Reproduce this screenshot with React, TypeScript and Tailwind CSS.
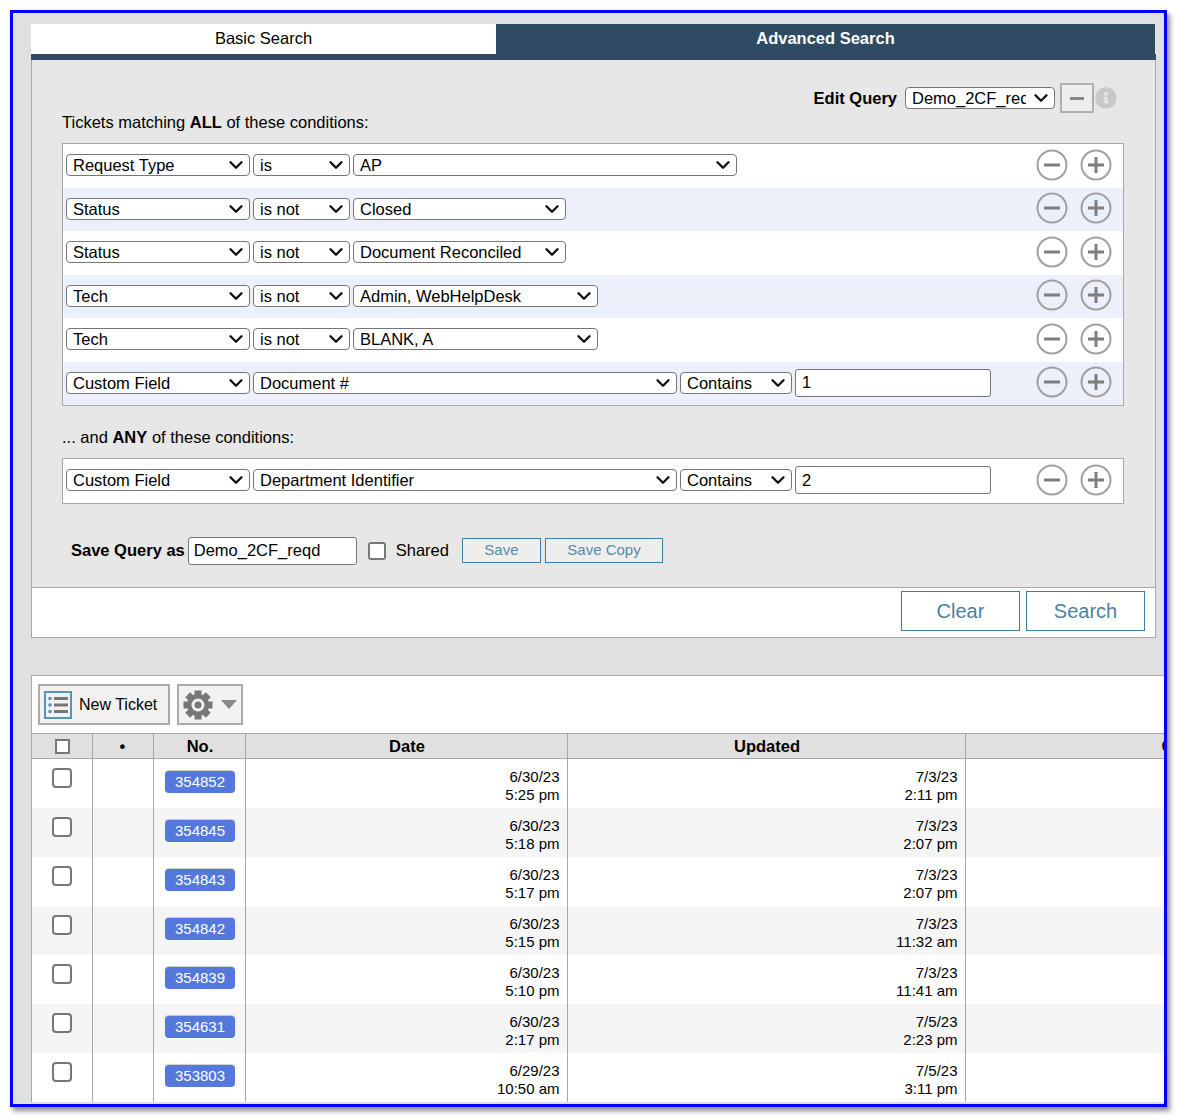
import { ChevronDown } from 'lucide-react';
import { FaInfoCircle } from 'react-icons/fa';

interface Condition {
  field: string;
  fieldWidth: string;
  op: string;
  opWidth: string;
  value: string;
  valueWidth: string;
  text?: string;
}

const FONT = "font-['Liberation_Sans',Arial,sans-serif]";

const allConditions: Condition[] = [
  { field: 'Request Type', fieldWidth: 'w-[184px]', op: 'is', opWidth: 'w-[97px]', value: 'AP', valueWidth: 'w-[384px]' },
  { field: 'Status', fieldWidth: 'w-[184px]', op: 'is not', opWidth: 'w-[97px]', value: 'Closed', valueWidth: 'w-[213px]' },
  { field: 'Status', fieldWidth: 'w-[184px]', op: 'is not', opWidth: 'w-[97px]', value: 'Document Reconciled', valueWidth: 'w-[213px]' },
  { field: 'Tech', fieldWidth: 'w-[184px]', op: 'is not', opWidth: 'w-[97px]', value: 'Admin, WebHelpDesk', valueWidth: 'w-[245px]' },
  { field: 'Tech', fieldWidth: 'w-[184px]', op: 'is not', opWidth: 'w-[97px]', value: 'BLANK, A', valueWidth: 'w-[245px]' },
  { field: 'Custom Field', fieldWidth: 'w-[184px]', op: 'Document #', opWidth: 'w-[424px]', value: 'Contains', valueWidth: 'w-[112px]', text: '1' },
];

const anyConditions: Condition[] = [
  { field: 'Custom Field', fieldWidth: 'w-[184px]', op: 'Department Identifier', opWidth: 'w-[424px]', value: 'Contains', valueWidth: 'w-[112px]', text: '2' },
];

const tickets = [
  { no: '354852', date: '6/30/23', time: '5:25 pm', upDate: '7/3/23', upTime: '2:11 pm' },
  { no: '354845', date: '6/30/23', time: '5:18 pm', upDate: '7/3/23', upTime: '2:07 pm' },
  { no: '354843', date: '6/30/23', time: '5:17 pm', upDate: '7/3/23', upTime: '2:07 pm' },
  { no: '354842', date: '6/30/23', time: '5:15 pm', upDate: '7/3/23', upTime: '11:32 am' },
  { no: '354839', date: '6/30/23', time: '5:10 pm', upDate: '7/3/23', upTime: '11:41 am' },
  { no: '354631', date: '6/30/23', time: '2:17 pm', upDate: '7/5/23', upTime: '2:23 pm' },
  { no: '353803', date: '6/29/23', time: '10:50 am', upDate: '7/5/23', upTime: '3:11 pm' },
];

function Select({ value, className }: { value: string; className: string }) {
  return (
    <div className={`relative h-[22px] shrink-0 ${className}`}>
      <select
        defaultValue={value}
        className="block h-[22px] w-full appearance-none rounded-[4px] border border-[#767676] bg-white pl-[6px] pr-[28px] text-[16.5px] leading-[20px] text-black"
      >
        <option value={value}>{value}</option>
      </select>
      <ChevronDown
        size={22}
        strokeWidth={2.6}
        className="pointer-events-none absolute right-[3px] top-0 text-[#111]"
      />
    </div>
  );
}

function RoundIcon({ plus }: { plus?: boolean }) {
  return (
    <svg width="32" height="32" viewBox="0 0 32 32" className="shrink-0">
      <circle cx="16" cy="16" r="14.5" fill="none" stroke="#a0a0a0" strokeWidth="2" />
      <path d={plus ? 'M8 16h16M16 8v16' : 'M8 16h16'} stroke="#7d7d7d" strokeWidth="3" fill="none" />
    </svg>
  );
}

function ConditionRow({ row, shaded }: { row: Condition; shaded: boolean }) {
  return (
    <div className={`flex h-[43.5px] items-start gap-[3px] pl-[3px] pr-[11px] pt-[10px] ${shaded ? 'bg-[#ebf0fa]' : 'bg-white'}`}>
      <Select value={row.field} className={row.fieldWidth} />
      <Select value={row.op} className={row.opWidth} />
      <Select value={row.value} className={row.valueWidth} />
      {row.text && (
        <input
          defaultValue={row.text}
          className="-mt-[3px] h-[28px] w-[196px] rounded-[3px] border border-[#767676] bg-white px-[6px] text-[16.5px] text-black"
        />
      )}
      <div className="-mt-[5.5px] ml-auto flex gap-[12px]">
        <RoundIcon />
        <RoundIcon plus />
      </div>
    </div>
  );
}

function ListIcon() {
  return (
    <svg width="28" height="28" viewBox="0 0 28 28" className="shrink-0">
      <rect x="1" y="1" width="26" height="26" fill="none" stroke="#5b93b5" strokeWidth="2" />
      <g fill="#5b93b5">
        <circle cx="6" cy="7.5" r="1.8" />
        <circle cx="6" cy="14" r="1.8" />
        <circle cx="6" cy="20.5" r="1.8" />
      </g>
      <path d="M10 7.5h14M10 14h14M10 20.5h14" stroke="#777" strokeWidth="3" fill="none" />
    </svg>
  );
}

function GearIcon() {
  return (
    <svg width="32" height="32" viewBox="0 0 32 32" className="shrink-0">
      <g stroke="#777" strokeWidth="7">
        <path d="M16 1.5v29M1.5 16h29M5.7 5.7l20.6 20.6M26.3 5.7L5.7 26.3" />
      </g>
      <circle cx="16" cy="16" r="11" fill="#777" />
      <circle cx="16" cy="16" r="6.5" fill="#f2f2f2" />
      <circle cx="16" cy="16" r="3.5" fill="#777" />
    </svg>
  );
}

function Checkbox() {
  return (
    <input
      type="checkbox"
      className="block h-[20px] w-[20px] appearance-none rounded-[4px] border-2 border-[#777] bg-white"
    />
  );
}

export default function App() {
  return (
    <div className={`${FONT} h-[1118px] w-[1178px] overflow-hidden bg-white pl-[10px] pt-[10px] text-[16.5px] text-black`}>
      <div className="h-[1097px] w-[1157px] overflow-hidden border-[3px] border-[#0000ff] bg-[#dfe0e2] pl-[18px] pt-[11px] shadow-[3px_4px_5px_rgba(0,0,0,0.45)]">
        <div className="w-[1125px]">
          {/* Tabs */}
          <div className="flex h-[30px] w-[1124px]">
            <div className="flex w-[465px] items-center justify-center bg-white pb-[2px]">Basic Search</div>
            <div className="flex flex-1 items-center justify-center bg-[#2f4a63] pb-[2px] font-bold text-white">
              Advanced Search
            </div>
          </div>
          <div className="h-[6px] bg-[#2f4a63]" />

          {/* Query form */}
          <div className="h-[527px] border-x border-[#a8a8a8] bg-[#e7e7e7] pl-[30px] pr-[31px] pt-[23px]">
            <div className="mr-[7px] flex h-[30px] items-center justify-end">
              <span className="mr-[8px] font-bold">Edit Query</span>
              <Select value="Demo_2CF_reqd" className="w-[150px]" />
              <button
                type="button"
                className="ml-[5px] flex h-[30px] w-[34px] items-center justify-center border-2 border-[#b0b0b0] bg-[#eeeeee]"
              >
                <span className="block h-[3px] w-[14px] bg-[#888]" />
              </button>
              <FaInfoCircle className="ml-[1px] text-[#c8c8c8]" size={22} />
            </div>
            <p className="-mt-[1px] h-[20px] leading-[20px]">
              Tickets matching <b>ALL</b> of these conditions:
            </p>
            <div className="mt-[11px] border border-[#a8a8a8]">
              {allConditions.map((row, i) => (
                <ConditionRow key={i} row={row} shaded={i % 2 === 1} />
              ))}
            </div>
            <p className="mt-[21px] h-[20px] leading-[20px]">
              ... and <b>ANY</b> of these conditions:
            </p>
            <div className="mt-[11px] border border-[#a8a8a8]">
              {anyConditions.map((row, i) => (
                <ConditionRow key={i} row={row} shaded={false} />
              ))}
            </div>
            <div className="mt-[33px] flex h-[28px] items-center pl-[9px]">
              <span className="font-bold">Save Query as</span>
              <input
                defaultValue="Demo_2CF_reqd"
                className="ml-[3px] h-[28px] w-[169px] rounded-[3px] border border-[#767676] bg-white px-[5px] text-[16.5px] text-black"
              />
              <input
                type="checkbox"
                className="ml-[11px] block h-[18px] w-[18px] appearance-none rounded-[3px] border-2 border-[#777] bg-white"
              />
              <span className="ml-[10px]">Shared</span>
              <button
                type="button"
                className="ml-[13px] h-[25px] w-[79px] border border-[#3f7f9c] bg-[#eeeeee] text-[15px] text-[#5a8aa5]"
              >
                Save
              </button>
              <button
                type="button"
                className="ml-[4px] h-[25px] w-[118px] border border-[#3f7f9c] bg-[#eeeeee] text-[15px] text-[#5a8aa5]"
              >
                Save Copy
              </button>
            </div>
          </div>

          {/* Form footer */}
          <div className="flex h-[51px] items-start justify-end gap-[6px] border border-[#a8a8a8] bg-white pr-[10px] pt-[3px]">
            <button type="button" className="h-[40px] w-[119px] border border-[#3f7f9c] bg-white text-[20px] text-[#4f7f9f]">
              Clear
            </button>
            <button type="button" className="h-[40px] w-[119px] border border-[#3f7f9c] bg-white text-[20px] text-[#4f7f9f]">
              Search
            </button>
          </div>
        </div>

        {/* Ticket list */}
        <div className="mt-[37px] w-[1300px] border-l border-t border-[#a8a8a8] bg-white">
          <div className="flex h-[57px] items-start gap-[7px] pl-[6px] pt-[8px]">
            <button
              type="button"
              className="flex h-[41px] w-[132px] items-center gap-[7px] border-2 border-[#aaaaaa] bg-[#f2f2f2] pl-[4px] text-[16px]"
            >
              <ListIcon />
              New Ticket
            </button>
            <button
              type="button"
              className="flex h-[41px] w-[66px] items-center gap-[7px] border-2 border-[#aaaaaa] bg-[#f2f2f2] pl-[3px]"
            >
              <GearIcon />
              <span className="h-0 w-0 border-x-[8px] border-t-[9px] border-x-transparent border-t-[#888]" />
            </button>
          </div>
          <table className="w-[1300px] table-fixed border-collapse text-[15px] leading-[18px]">
            <colgroup>
              <col className="w-[60px]" />
              <col className="w-[61px]" />
              <col className="w-[92px]" />
              <col className="w-[322px]" />
              <col className="w-[398px]" />
              <col />
            </colgroup>
            <thead>
              <tr className="h-[25px] border-y border-[#a8a8a8] bg-[#e0e0e0] text-[16.5px]">
                <th className="border-r border-[#a8a8a8] pl-[1px]">
                  <span className="mx-auto block h-[15px] w-[15px] border-2 border-[#777] bg-white" />
                </th>
                <th className="border-r border-[#a8a8a8]">•</th>
                <th className="border-r border-[#a8a8a8] pl-[2px]">No.</th>
                <th className="border-r border-[#a8a8a8] pl-[2px]">Date</th>
                <th className="border-r border-[#a8a8a8] pl-[2px]">Updated</th>
                <th className="pl-[196px] text-left">Custom</th>
              </tr>
            </thead>
            <tbody>
              {tickets.map((t, i) => (
                <tr key={t.no} className={`h-[49px] ${i % 2 === 1 ? 'bg-[#f5f5f5]' : 'bg-white'}`}>
                  <td className="border-r border-[#a8a8a8] pl-[20px] pt-[9px] align-top">
                    <Checkbox />
                  </td>
                  <td className="border-r border-[#a8a8a8]" />
                  <td className="border-r border-[#a8a8a8] pl-[2px] pt-[12px] align-top">
                    <span className="mx-auto flex h-[22px] w-[70px] items-center justify-center rounded-[4px] bg-[#5578dc] text-white shadow-[0_-1px_1px_rgba(0,0,0,0.2)]">
                      {t.no}
                    </span>
                  </td>
                  <td className="border-r border-[#a8a8a8] pr-[7px] pt-[9px] text-right align-top">
                    {t.date}
                    <br />
                    {t.time}
                  </td>
                  <td className="border-r border-[#a8a8a8] pr-[7px] pt-[9px] text-right align-top">
                    {t.upDate}
                    <br />
                    {t.upTime}
                  </td>
                  <td />
                </tr>
              ))}
            </tbody>
          </table>
        </div>
      </div>
    </div>
  );
}
